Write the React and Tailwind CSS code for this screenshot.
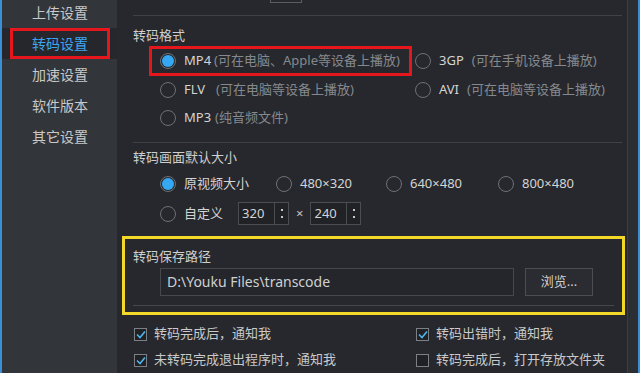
import React from 'react';

const FONT = { fontFamily: '"Noto Sans", "Noto Sans CJK SC", sans-serif' };

const Radio = ({ checked }) => (
  <span className="w-[16px] h-[16px] rounded-full border border-[#6d7075] flex items-center justify-center shrink-0">
    {checked && <span className="w-[12px] h-[12px] rounded-full bg-[#35a8f3]" />}
  </span>
);

const Check = ({ checked }) => (
  <span className="w-[13px] h-[13px] border border-[#7c7f84] bg-[#1f2125] flex items-center justify-center shrink-0">
    {checked && (
      <svg width="10" height="9" viewBox="0 0 10 9">
        <path d="M1 4.5 L4 7.5 L9 1.5" fill="none" stroke="#4fb4ec" strokeWidth="1.6" />
      </svg>
    )}
  </span>
);

const Spin = ({ value }) => (
  <span className="flex items-stretch h-[23px] w-[51px] border border-[#4a4d52] bg-[#202226]">
    <span className="flex-1 pl-[3px] leading-[21px] text-[#d4d4d4]">{value}</span>
    <span className="w-[14px] border-l border-[#4a4d52] flex flex-col items-center justify-center gap-[5px]">
      <span className="w-[2px] h-[2px] bg-[#c8c8c8]" />
      <span className="w-[2px] h-[2px] bg-[#c8c8c8]" />
    </span>
  </span>
);

const Option = ({ checked, name, note, gap = 'ml-[8px]' }) => (
  <span className="flex items-center">
    <Radio checked={checked} />
    <span className="ml-[8px] text-[#d4d4d4]">{name}</span>
    {note && <span className={`${gap} text-[#85888d]`}>{note}</span>}
  </span>
);

const menu = ['上传设置', '转码设置', '加速设置', '软件版本', '其它设置'];

export default function App() {
  return (
    <div
      className="w-[640px] h-[373px] overflow-hidden flex bg-[#26282d] border-l-2 border-r-2 border-[#3b8fd6] text-[13px]"
      style={FONT}
    >
      {/* Sidebar */}
      <div className="w-[115px] shrink-0 bg-[#323539] flex flex-col">
        <div className="-mt-[3px]" />
        {menu.map((m) =>
          m === '转码设置' ? (
            <div key={m} className="h-[31px] bg-[#25272c] flex items-center pl-[8px]">
              <span className="w-[100px] h-[31px] border-[3px] border-[#e5161c] flex items-center pl-[19px] text-[#3ea6f0] text-[14px]">
                {m}
              </span>
            </div>
          ) : (
            <div key={m} className="h-[31px] flex items-center pl-[30px] text-[#c9c9c9] text-[14px]">
              {m}
            </div>
          )
        )}
      </div>

      {/* Main */}
      <div className="flex-1 flex flex-col pl-[5px]">
        {/* clipped top row */}
        <div className="h-[3px] flex items-end pl-[148px]">
          <span className="w-[32px] h-[20px] border border-[#5a5d62] -mt-[17px]" />
        </div>
        <div className="h-[12px]" />
        <div className="ml-[11px] mr-[5px] h-px bg-[#3e4146]" />

        <div className="ml-[11px] mt-[10px] h-[18px] leading-[18px] text-[#cfcfcf]">转码格式</div>

        <div className="mt-[2px] grid grid-cols-[263px_1fr] ml-[27px]">
          <div className="h-[30px] border-[3px] border-[#e5161c] flex items-center pl-[8px]">
            <Option checked name="MP4" note="(可在电脑、Apple等设备上播放)" gap="ml-[3px]" />
          </div>
          <div className="h-[30px] flex items-center pl-[3px]">
            <Option name="3GP" note="(可在手机设备上播放)" />
          </div>
          <div className="h-[28px] flex items-center pl-[11px]">
            <Option name="FLV" note="(可在电脑等设备上播放)" gap="ml-[11px]" />
          </div>
          <div className="h-[28px] flex items-center pl-[3px]">
            <Option name="AVI" note="(可在电脑等设备上播放)" />
          </div>
          <div className="h-[28px] flex items-center pl-[11px]">
            <Option name="MP3" note="(纯音频文件)" gap="ml-[4px]" />
          </div>
        </div>

        <div className="ml-[11px] mr-[5px] mt-[10px] h-px bg-[#3e4146]" />
        <div className="ml-[11px] mt-[5px] h-[18px] leading-[18px] text-[#cfcfcf]">转码画面默认大小</div>

        <div className="mt-[4px] ml-[38px] h-[28px] grid grid-cols-[116px_110px_112px_1fr] items-center">
          <Option checked name="原视频大小" />
          <Option name="480×320" />
          <Option name="640×480" />
          <Option name="800×480" />
        </div>
        <div className="mt-[2px] ml-[38px] h-[28px] flex items-center">
          <Option name="自定义" />
          <span className="ml-[15px]">
            <Spin value="320" />
          </span>
          <span className="mx-[7px] text-[#c4c4c4]">×</span>
          <Spin value="240" />
        </div>

        {/* save path */}
        <div className="mt-[8px] mr-[2px] h-[80px] border-[3px] border-[#f2d829] flex flex-col">
          <div className="mt-[8px] ml-[8px] h-[18px] leading-[18px] text-[#cfcfcf]">转码保存路径</div>
          <div className="mt-[3px] ml-[35px] flex items-center gap-[11px]">
            <span className="w-[354px] h-[28px] border border-[#45484d] bg-[#24262b] pl-[6px] leading-[26px] text-[#d0d0d0] text-[14px]">
              D:\Youku Files\transcode
            </span>
            <span className="w-[68px] h-[28px] border border-[#4a4d52] bg-[#2a2c31] flex items-center justify-center text-[#d0d0d0]">
              浏览...
            </span>
          </div>
          <div className="mt-[9px] ml-[8px] mr-[8px] h-px bg-[#45484d]" />
        </div>

        <div className="mt-[6px] ml-[12px] grid grid-cols-[282px_1fr] text-[#c9c9c9]">
          <div className="h-[26px] flex items-center gap-[7px]">
            <Check checked />
            <span>转码完成后，通知我</span>
          </div>
          <div className="h-[26px] flex items-center gap-[7px]">
            <Check checked />
            <span>转码出错时，通知我</span>
          </div>
          <div className="h-[26px] flex items-center gap-[7px]">
            <Check checked />
            <span>未转码完成退出程序时，通知我</span>
          </div>
          <div className="h-[26px] flex items-center gap-[7px]">
            <Check />
            <span>转码完成后，打开存放文件夹</span>
          </div>
        </div>
      </div>

      {/* right edge strip */}
      <div className="w-[11px] shrink-0 bg-[#2b2e33] border-l border-[#3a3d42]" />
    </div>
  );
}
